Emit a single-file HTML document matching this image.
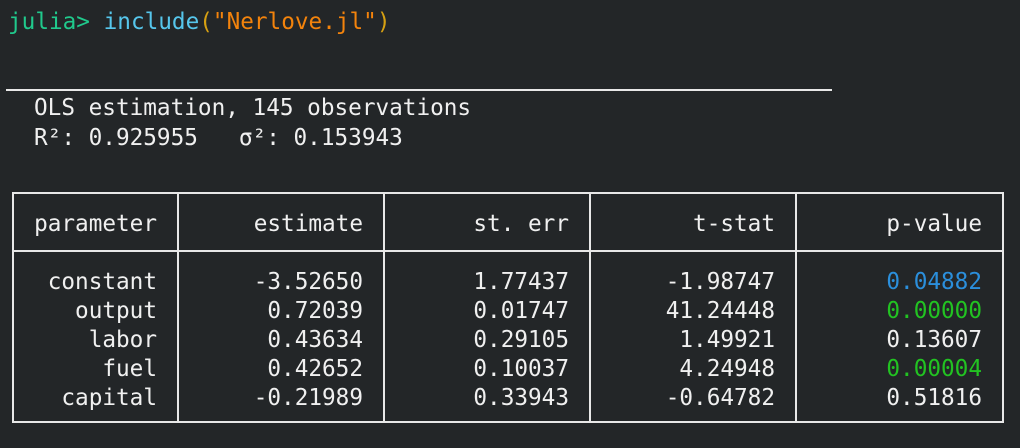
<!DOCTYPE html><html><head><style>
body{margin:0;background:#232628;width:1020px;height:448px;overflow:hidden;position:relative;font-family:"DejaVu Sans Mono","Liberation Mono",monospace;font-size:22.7px;color:#f0f0f0}
.l{position:absolute;white-space:pre;line-height:29px}
.b{position:absolute;background:#e8e8e8}
.c{position:absolute;text-align:right;white-space:pre;line-height:29px}
</style></head><body>
<div class="l" style="left:8px;top:8px"><span style="color:#20c98c">julia&gt; </span><span style="color:#56c6ec">include</span><span style="color:#d6a012">(</span><span style="color:#f3830c">"Nerlove.jl"</span><span style="color:#d6a012">)</span></div>
<div class="b" style="left:6px;top:89px;width:826px;height:2px"></div>
<div class="l" style="left:34px;top:94px">OLS estimation, 145 observations</div>
<div class="l" style="left:34px;top:124px">R²: 0.925955   σ²: 0.153943</div>
<div class="b" style="left:12px;top:192px;width:992px;height:2px"></div>
<div class="b" style="left:12px;top:250px;width:992px;height:2px"></div>
<div class="b" style="left:12px;top:421px;width:992px;height:2px"></div>
<div class="b" style="left:12px;top:192px;width:2px;height:231px"></div>
<div class="b" style="left:177px;top:192px;width:2px;height:231px"></div>
<div class="b" style="left:383px;top:192px;width:2px;height:231px"></div>
<div class="b" style="left:589px;top:192px;width:2px;height:231px"></div>
<div class="b" style="left:795px;top:192px;width:2px;height:231px"></div>
<div class="b" style="left:1002px;top:192px;width:2px;height:231px"></div>
<div class="c" style="right:863px;top:210px">parameter</div>
<div class="c" style="right:657px;top:210px">estimate</div>
<div class="c" style="right:451px;top:210px">st. err</div>
<div class="c" style="right:245px;top:210px">t-stat</div>
<div class="c" style="right:38px;top:210px">p-value</div>
<div class="c" style="right:863px;top:268px">constant
output
labor
fuel
capital</div>
<div class="c" style="right:657px;top:268px">-3.52650
0.72039
0.43634
0.42652
-0.21989</div>
<div class="c" style="right:451px;top:268px">1.77437
0.01747
0.29105
0.10037
0.33943</div>
<div class="c" style="right:245px;top:268px">-1.98747
41.24448
1.49921
4.24948
-0.64782</div>
<div class="c" style="right:38px;top:268px"><span style="color:#2b8fdc">0.04882</span>
<span style="color:#22c322">0.00000</span>
0.13607
<span style="color:#22c322">0.00004</span>
0.51816</div>
</body></html>
